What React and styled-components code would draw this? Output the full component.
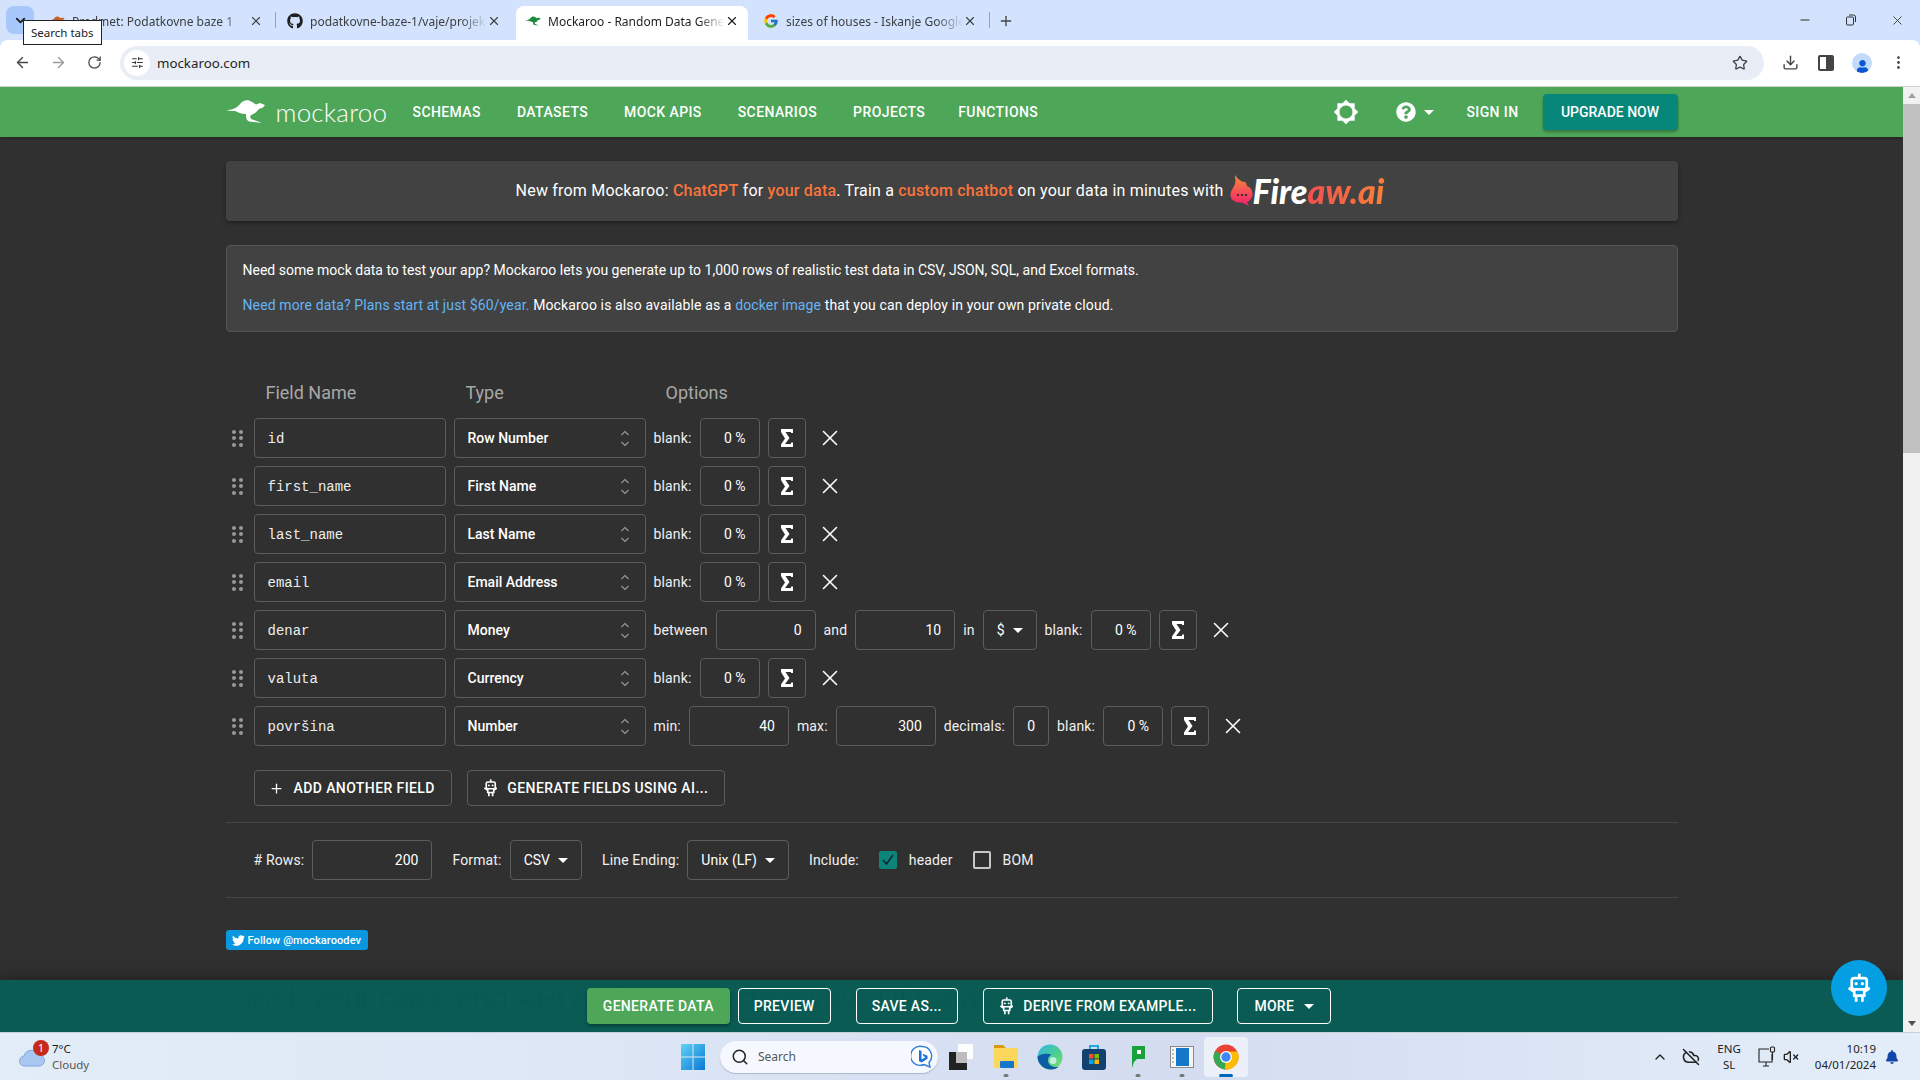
import React from 'react';
import styled, { createGlobalStyle } from 'styled-components';
import {
  ArrowLeft, ArrowRight, RotateCw, Star, Download, EllipsisVertical, ChevronDown, ChevronUp,
  X, Minus, Plus, Search, VolumeX, CloudOff, SlidersHorizontal,
} from 'lucide-react';
import { FaGithub, FaTwitter, FaQuestionCircle, FaUser, FaBell } from 'react-icons/fa';
import { FcGoogle } from 'react-icons/fc';
import { MdBrightness5 } from 'react-icons/md';

const GlobalStyle = createGlobalStyle`
  html, body { margin: 0; padding: 0; height: 100%; overflow: hidden; }
  body { font-family: Roboto, 'Liberation Sans', sans-serif; font-size: 14px; background: #d3e3fd; }
  * { box-sizing: border-box; }
`;

const Screen = styled.div`
  display: flex;
  flex-direction: column;
  height: 100vh;
`;

// Browser chrome - start
const TabStrip = styled.div`
  position: relative;
  display: flex;
  align-items: flex-end;
  height: 40px;
  padding-left: 6px;
  background: #d3e3fd;
  font-family: 'Noto Sans', sans-serif;
  font-size: 12px;
  color: #3c4043;
`;

const SearchTabs = styled.div`
  display: flex;
  align-items: center;
  justify-content: center;
  width: 28px;
  height: 28px;
  margin: 0 6px 6px 0;
  border-radius: 8px;
  background: #a8c7fa;
  color: #1f1f1f;
`;

const Tooltip = styled.div`
  position: absolute;
  left: 23px;
  top: 20px;
  padding: 4px 7px;
  background: #fff;
  border: 1px solid #222;
  font-size: 11.5px;
  line-height: 15px;
  color: #222;
  z-index: 2;
`;

const Tab = styled.div`
  position: relative;
  display: flex;
  align-items: center;
  width: 232px;
  height: 34px;
  margin-right: 6px;
  padding: 0 9px 4px 9px;
  border-radius: 8px 8px 0 0;
  background: ${props => (props.$active ? '#fff' : 'transparent')};
  color: ${props => (props.$active ? '#1f1f1f' : '#3c4043')};

  &::after {
    content: '';
    display: ${props => (props.$divider ? 'block' : 'none')};
    position: absolute;
    right: -4px;
    top: 6px;
    width: 1px;
    height: 16px;
    background: #8ea3c4;
  }
`;

const TabIcon = styled.span`
  display: flex;
  flex: 0 0 16px;
  margin-right: 7px;
`;

const TabTitle = styled.span`
  flex: 1;
  overflow: hidden;
  white-space: nowrap;
  -webkit-mask-image: linear-gradient(to right, #000 85%, transparent 100%);
  mask-image: linear-gradient(to right, #000 85%, transparent 100%);
`;

const NewTab = styled.div`
  display: flex;
  align-items: center;
  justify-content: center;
  width: 20px;
  height: 34px;
  margin-left: 4px;
  padding-bottom: 4px;
  color: #444;
`;

const WindowButtons = styled.div`
  display: flex;
  margin-left: auto;
  align-self: stretch;
`;

const WindowButton = styled.div`
  display: flex;
  align-items: center;
  justify-content: center;
  width: 46px;
  color: #333;
`;

const Toolbar = styled.div`
  display: flex;
  align-items: center;
  height: 47px;
  padding: 0 4px 1px;
  background: #fff;
  border-bottom: 1px solid #d0d0d0;
  border-radius: 8px 8px 0 0;
  color: #444746;
`;

const ToolButton = styled.div`
  display: flex;
  align-items: center;
  justify-content: center;
  flex: 0 0 36px;
  height: 34px;
  color: ${props => props.$dim ? '#9a9c9f' : '#444746'};
`;

const Omnibox = styled.div`
  flex: 1;
  display: flex;
  align-items: center;
  height: 34px;
  margin: 0 8px;
  padding: 0 16px 0 4px;
  border-radius: 17px;
  background: #e9eef6;
  font-family: 'Noto Sans', sans-serif;
  font-size: 13.3px;
  color: #1f1f1f;
`;

const SiteChip = styled.div`
  display: flex;
  align-items: center;
  justify-content: center;
  width: 26px;
  height: 26px;
  margin-right: 7px;
  border-radius: 50%;
  background: #fff;
`;

const Address = styled.span`
  flex: 1;
`;

const Avatar = styled.div`
  display: flex;
  align-items: flex-end;
  justify-content: center;
  width: 20px;
  height: 20px;
  border-radius: 50%;
  background: #c2dbfb;
  color: #0b57d0;
  overflow: hidden;
`;
// Browser chrome - end

const Viewport = styled.div`
  position: relative;
  flex: 1;
  display: flex;
  min-height: 0;
  overflow: hidden;
  background: #303030;
`;

const Page = styled.div`
  flex: 1;
  min-width: 0;
  color: #fff;
`;

const NavBar = styled.div`
  height: 50px;
  background: #4ea658;
  box-shadow: 0 1px 3px rgba(0, 0, 0, 0.3);
`;

const NavInner = styled.div`
  display: flex;
  align-items: center;
  width: 1452px;
  height: 100%;
  margin: 0 auto;
`;

const Logo = styled.div`
  display: flex;
  align-items: center;
  flex: 0 0 187px;
  gap: 10px;
`;

const LogoText = styled.span`
  font-family: Lato, sans-serif;
  font-weight: 300;
  font-size: 26px;
  letter-spacing: 0.2px;
  color: #fff;
  line-height: 1;
`;

const NavLink = styled.a`
  margin-right: ${props => props.$gap ?? 36}px;
  font-weight: 500;
  font-size: 14px;
  letter-spacing: 0.4px;
  color: #fff;
  white-space: nowrap;
`;

const NavRight = styled.div`
  display: flex;
  align-items: center;
  margin-left: auto;
  color: #fff;
`;

const HelpGroup = styled.div`
  display: flex;
  align-items: center;
  gap: 8px;
  margin: 0 32px 0 37px;
`;

const Caret = styled.span`
  display: inline-block;
  width: 0;
  height: 0;
  border-left: 5px solid transparent;
  border-right: 5px solid transparent;
  border-top: 5px solid ${props => props.$color || '#fff'};
`;

const UpgradeButton = styled.div`
  display: flex;
  align-items: center;
  justify-content: center;
  width: 135px;
  height: 36px;
  margin-left: 24px;
  border-radius: 4px;
  background: #07867a;
  font-weight: 500;
  box-shadow: 0 2px 3px rgba(0, 0, 0, 0.3);
`;

const Content = styled.div`
  width: 1452px;
  margin: 0 auto;
  padding-top: 24px;
`;

const Banner = styled.div`
  display: flex;
  align-items: center;
  justify-content: center;
  height: 60px;
  margin-bottom: 24px;
  padding-bottom: 1px;
  border-radius: 4px;
  background: #424242;
  box-shadow: 0 2px 4px rgba(0, 0, 0, 0.35);
  font-size: 16px;
  letter-spacing: 0.2px;
`;

const Hot = styled.span`
  color: #f9743c;
  font-weight: 500;
`;

const FireMark = styled.span`
  display: flex;
  align-items: center;
  margin-left: 6px;
  font-family: Lato, sans-serif;
  font-style: italic;
  font-weight: 900;
  font-size: 34px;
  letter-spacing: 0;
  line-height: 1;
`;

const FireAccent = styled.span`
  padding-right: 3px;
  background: linear-gradient(90deg, #f2504e, #f9823a);
  -webkit-background-clip: text;
  background-clip: text;
  color: transparent;
`;

const InfoBox = styled.div`
  height: 87px;
  padding: 15px 16px;
  border: 1px solid #555;
  border-radius: 4px;
  background: #424242;
  line-height: 19px;
`;

const InfoLine = styled.p`
  margin: 0 0 16px;
  letter-spacing: ${props => props.$spread || 0}px;
`;

const Link = styled.a`
  color: #64b5f6;
`;

const ColumnHeads = styled.div`
  display: grid;
  grid-template-columns: 200px 200px 200px;
  height: 26px;
  margin-top: 48px;
  margin-bottom: 12px;
  padding-left: 40px;
  font-size: 18px;
  line-height: 26px;
  color: #a8a8a8;
`;

const Row = styled.div`
  display: flex;
  align-items: center;
  gap: 8px;
  height: 40px;
  margin-bottom: 8px;
`;

const Handle = styled.div`
  display: grid;
  grid-template-columns: 4px 4px;
  gap: 2.5px 3px;
  justify-content: center;
  flex: 0 0 20px;
  padding-left: 4px;

  span {
    width: 4px;
    height: 4px;
    border-radius: 50%;
    background: #999;
  }
`;

const Box = styled.div`
  display: flex;
  align-items: center;
  flex: 0 0 ${props => props.$w}px;
  height: 40px;
  border: 1px solid #5c5c5c;
  border-radius: 4px;
`;

const NameBox = styled(Box)`
  padding: 1px 0 0 13px;
  font-family: 'Liberation Mono', monospace;
  font-size: 14px;
  color: #eee;
`;

const TypeBox = styled(Box)`
  justify-content: space-between;
  padding: 0 15px 0 13px;
  font-weight: 500;
`;

const NumberBox = styled(Box)`
  justify-content: ${props => (props.$center ? 'center' : 'flex-end')};
  padding: ${props => (props.$center ? '0' : '0 13px')};
`;

const DropBox = styled.div`
  display: flex;
  align-items: center;
  gap: 8px;
  height: 40px;
  padding: 0 ${props => props.$pad || 13}px;
  border: 1px solid #5c5c5c;
  border-radius: 4px;
`;

const Label = styled.span`
  white-space: nowrap;
  letter-spacing: 0.15px;
  color: #f0f0f0;
`;

const SumButton = styled(Box)`
  justify-content: center;
  flex-basis: 38px;
`;

const RemoveButton = styled.div`
  display: flex;
  align-items: center;
  justify-content: center;
  flex: 0 0 32px;
  color: #fff;
`;

const Actions = styled.div`
  display: flex;
  gap: 15px;
  margin: 24px 0 16px 28px;
`;

const OutlineButton = styled.div`
  display: flex;
  align-items: center;
  gap: 10px;
  height: 36px;
  padding: 0 16px 0 ${props => props.$lead || 16}px;
  border: 1px solid #5c5c5c;
  border-radius: 4px;
  font-weight: 500;
  letter-spacing: 0.4px;
  white-space: nowrap;
`;

const Rule = styled.div`
  height: 1px;
  background: #474747;
`;

const Settings = styled.div`
  display: flex;
  align-items: center;
  height: 40px;
  margin: 17px 0 17px 28px;
`;

const Spaced = styled.span`
  display: flex;
  align-items: center;
  gap: 8px;
  margin-right: ${props => props.$gap}px;
`;

const Check = styled.span`
  display: flex;
  align-items: center;
  justify-content: center;
  width: 18px;
  height: 18px;
  margin-left: ${props => props.$offset || 0}px;
  margin-right: 12px;
  border-radius: 2px;
  background: ${props => (props.$on ? '#0b8577' : 'transparent')};
  border: 2px solid ${props => (props.$on ? '#0b8577' : '#c8c8c8')};
`;

const TwitterFollow = styled.a`
  display: inline-flex;
  align-items: center;
  gap: 3px;
  height: 20px;
  margin-top: 32px;
  padding: 0 7px 0 6px;
  border-radius: 3px;
  background: #0a97e0;
  color: #fff;
  font-size: 11px;
  font-weight: 500;
  letter-spacing: 0.1px;
`;

const Tagline = styled.h2`
  margin: 29px 0 0;
  font-size: 32px;
  font-weight: 300;
  line-height: 38px;
  color: #102010;
`;

const ActionBar = styled.div`
  position: absolute;
  left: 0;
  right: 17px;
  bottom: 0;
  display: flex;
  align-items: center;
  justify-content: center;
  height: 52px;
  padding-left: 15px;
  background: rgba(7, 95, 87, 0.92);
  box-shadow: 0 -4px 12px rgba(0, 0, 0, 0.25);
  color: #fff;
`;

const GreenButton = styled.div`
  display: flex;
  align-items: center;
  height: 36px;
  margin-right: 8px;
  padding: 0 16px;
  border-radius: 4px;
  background: #4ea658;
  font-weight: 500;
  letter-spacing: 0.3px;
  box-shadow: 0 2px 3px rgba(0, 0, 0, 0.3);
`;

const BarButton = styled.div`
  display: flex;
  align-items: center;
  gap: 10px;
  height: 36px;
  margin-left: ${props => props.$gap ?? 24}px;
  padding: 0 ${props => props.$pad || 15}px;
  border: 1px solid #fff;
  border-radius: 4px;
  font-weight: 500;
  letter-spacing: 0.3px;
  white-space: nowrap;
`;

const BotBubble = styled.div`
  position: absolute;
  right: 33px;
  bottom: 16px;
  display: flex;
  align-items: center;
  justify-content: center;
  width: 56px;
  height: 56px;
  border-radius: 50%;
  background: #049ee2;
  color: #fff;
`;

const Scrollbar = styled.div`
  position: relative;
  z-index: 1;
  display: flex;
  flex-direction: column;
  align-items: center;
  flex: 0 0 17px;
  background: #f1f1f1;
`;

const ScrollArrow = styled.span`
  display: block;
  margin: 6px 0;
  border-left: 4px solid transparent;
  border-right: 4px solid transparent;
  ${props => (props.$down
    ? 'margin-top: auto; border-top: 5px solid #505050;'
    : 'border-bottom: 5px solid #a0a0a0;')}
`;

const ScrollThumb = styled.div`
  width: 100%;
  height: 349px;
  background: #c1c1c1;
`;

// Windows taskbar - start
const Taskbar = styled.div`
  display: flex;
  align-items: center;
  height: 48px;
  background: linear-gradient(90deg, #e3edf7 0%, #dde7f6 30%, #d4dcf0 60%, #dbe5f5 80%, #e4eef9 100%);
  border-top: 1px solid #c8ced6;
  font-family: 'Noto Sans', sans-serif;
  font-size: 12px;
  color: #1c1c1c;
`;

const Weather = styled.div`
  display: flex;
  align-items: center;
  flex: 0 0 671px;
  padding-left: 19px;
`;

const CloudWrap = styled.div`
  position: relative;
  width: 26px;
  height: 20px;
  margin-right: 7px;
`;

const Badge = styled.span`
  position: absolute;
  right: -4px;
  top: -7px;
  width: 16px;
  height: 16px;
  border-radius: 50%;
  background: #c42b1c;
  color: #fff;
  font-size: 10.5px;
  line-height: 16px;
  text-align: center;
`;

const WeatherText = styled.div`
  line-height: 15.5px;
  font-size: 11.5px;
`;

const Muted = styled.div`
  color: #555;
`;

const TaskIcon = styled.div`
  position: relative;
  display: flex;
  align-items: center;
  justify-content: center;
  flex: 0 0 44px;
  height: 40px;
  margin-right: ${props => props.$gap || 0}px;
  border-radius: 4px;
  background: ${props => (props.$active ? 'rgba(255,255,255,0.55)' : 'transparent')};

  &::after {
    content: '';
    display: ${props => (props.$running ? 'block' : 'none')};
    position: absolute;
    left: 50%;
    bottom: 0;
    width: ${props => (props.$active ? 14 : 5)}px;
    height: 3px;
    transform: translateX(-50%);
    border-radius: 2px;
    background: ${props => (props.$active ? '#0067c0' : '#777')};
  }
`;

const SearchPill = styled.div`
  display: flex;
  align-items: center;
  gap: 9px;
  width: 218px;
  height: 32px;
  margin-right: 2px;
  padding: 0 5px 0 11px;
  border-radius: 16px;
  background: #f5f8fe;
  box-shadow: 0 1px 1px rgba(90, 100, 130, 0.35);
  color: #555;
`;

const SearchWord = styled.span`
  flex: 1;
`;

const Tray = styled.div`
  display: flex;
  align-items: center;
  margin-left: auto;
  padding-right: 21px;
  color: #222;
`;

const TrayGap = styled.span`
  display: flex;
  margin-left: ${props => props.$left}px;
`;

const LangBlock = styled.div`
  margin: 0 17px;
  text-align: center;
  line-height: 16px;
  font-size: 11.5px;
`;

const Clock = styled.div`
  margin: 0 9px 0 16px;
  text-align: right;
  line-height: 16px;
  font-size: 11.5px;
`;
// Windows taskbar - end

const KangarooIcon = ({ width = 40, color = '#fff' }) => (
  <svg width={width} viewBox="0 0 40 26" fill={color}>
    <path d="M0 11C6 11 11 9 14 5C17 1 22 0 26 3L30 5.5L34 4L39 6L37 8.5L33 10C31 12 30 14 27 15L24 17L25 20L36 24L23 22.5C20 21 20 18 20 15C15 15 12 13 9 12C6 12 3 12 0 11Z" />
  </svg>
);

const RobotIcon = ({ size = 18, color = 'currentColor' }) => (
  <svg width={size * 0.75} height={size} viewBox="3 0 18 24" fill="none" stroke={color} strokeWidth="2.2">
    <path d="M12 0.5V4" />
    <rect x="6" y="4" width="12" height="9" rx="2" />
    <path d="M9.5 8.5h.01M14.5 8.5h.01" strokeLinecap="round" strokeWidth="2.6" />
    <path d="M8 13v5h8v-5M3.5 12l4.5 3M20.5 12L16 15M9.5 18v5M14.5 18v5" />
  </svg>
);

const SigmaIcon = () => (
  <svg width="14" height="18" viewBox="0 0 14 18" fill="#fff">
    <path d="M1 0H13V4H11V3H5.500L9.500 9L5 15H11V13.500H13V18H1V15.500L5 9.500L1 3Z" />
  </svg>
);

const UpDownIcon = () => (
  <svg width="10" height="17" viewBox="0 0 10 17" fill="none" stroke="#999" strokeWidth="1.2">
    <path d="M1.5 5L5 1.5L8.5 5M1.5 12L5 15.5L8.5 12" />
  </svg>
);

const FlameIcon = () => (
  <svg width="23" height="31" viewBox="0 0 23 31">
    <defs>
      <linearGradient id="flame" x1="0" y1="0" x2="0" y2="1">
        <stop offset="0" stopColor="#f98b3a" />
        <stop offset="1" stopColor="#f01e6a" />
      </linearGradient>
    </defs>
    <path fill="url(#flame)" d="M5 0C7 3 9 5 13 7C16 6 16 8 17 11C20 12 23 15 22.5 20C22 24 19 26.500 17 27L19 31L12 27.500C5 28 0 25 0.500 19C1 15 4 12 5 9C6 6 5 3 5 0Z" />
    <path fill="#3f2a2a" d="M7 19h2v2H7zM11 19h2v2h-2zM15 19h2v2h-2z" />
  </svg>
);

const ChromeLogo = ({ size = 26 }) => (
  <svg width={size} height={size} viewBox="0 0 24 24">
    <circle cx="12" cy="12" r="11.500" fill="#ea4335" />
    <path fill="#34a853" d="M12 12L2 6.500A11.500 11.500 0 0 0 12 23.500L17 14Z" />
    <path fill="#fbbc05" d="M12 12L11 23.500A11.500 11.500 0 0 0 22.500 7H12Z" />
    <circle cx="12" cy="12" r="5.500" fill="#fff" />
    <circle cx="12" cy="12" r="4.300" fill="#4285f4" />
  </svg>
);

const WindowsLogo = () => (
  <svg width="24" height="26" viewBox="0 0 24 26">
    <defs>
      <linearGradient id="win" x1="0" y1="0" x2="1" y2="1">
        <stop offset="0" stopColor="#5fd3f5" />
        <stop offset="1" stopColor="#0a78d4" />
      </linearGradient>
    </defs>
    <path fill="url(#win)" d="M0 0h11.500v12.500H0zM12.500 0H24v12.500H12.500zM0 13.500h11.500V26H0zM12.500 13.500H24V26H12.500z" />
  </svg>
);

const BingIcon = () => (
  <svg width="22" height="24" viewBox="0 0 22 24" fill="none">
    <path d="M11 1.500a9.500 9.500 0 0 1 7 16l1 4.500-6-2.500a9.500 9.500 0 1 1-2-18z" stroke="#2b7de0" strokeWidth="1.4" fill="#fff" />
    <path d="M8 5l2.500 1v8.500l4-2.200-2-1-1-2.500 5 2v3l-6 3.700-2.500-1.500z" fill="#1b6fd8" />
  </svg>
);

const TaskViewIcon = () => (
  <svg width="26" height="26" viewBox="0 0 26 26">
    <rect x="9" y="0" width="15" height="15" fill="#fdfdfd" />
    <rect x="0" y="8" width="18" height="18" fill="#222" />
    <rect x="7" y="8" width="11" height="11" fill="#bdbdbd" />
  </svg>
);

const FolderIcon = () => (
  <svg width="26" height="25" viewBox="0 0 26 25">
    <path fill="#d99a12" d="M1 1h9l3 3h12v4H1z" />
    <rect x="1" y="4" width="24" height="20" rx="1" fill="#fbd75b" />
    <rect x="7" y="17" width="14" height="7" rx="1" fill="#1477c8" />
  </svg>
);

const EdgeIcon = () => (
  <svg width="26" height="26" viewBox="0 0 26 26">
    <defs>
      <linearGradient id="edge" x1="0" y1="0" x2="1" y2="1">
        <stop offset="0" stopColor="#2fb7e8" />
        <stop offset="0.6" stopColor="#4ed08a" />
        <stop offset="1" stopColor="#8adf6b" />
      </linearGradient>
    </defs>
    <circle cx="13" cy="13" r="12.500" fill="url(#edge)" />
    <path fill="#0c59a4" d="M0.500 13C1 20 7 25.500 14 25.500c3.500 0 6-1 8-3-4 1.500-9 0-10.500-3.500-1.500-3.500 0-7 3-8.500-5-2-13 0-14 2.500z" />
    <circle cx="16" cy="16.500" r="3.500" fill="#dff5ee" opacity="0.8" />
  </svg>
);

const StoreIcon = () => (
  <svg width="24" height="26" viewBox="0 0 24 26">
    <path d="M8 5V2h8v3" fill="none" stroke="#25a5e0" strokeWidth="2" />
    <rect x="0" y="5" width="24" height="21" rx="3" fill="#12406f" />
    <rect x="7" y="10" width="4.500" height="4.500" fill="#f25022" />
    <rect x="12.500" y="10" width="4.500" height="4.500" fill="#7fba00" />
    <rect x="7" y="15.500" width="4.500" height="4.500" fill="#00a4ef" />
    <rect x="12.500" y="15.500" width="4.500" height="4.500" fill="#ffb900" />
  </svg>
);

const GreenAppIcon = () => (
  <svg width="18" height="24" viewBox="0 0 18 24">
    <path fill="#1aa23a" d="M3 1h13v13H8l-3 3-2 6z" />
    <rect x="8" y="5" width="4" height="4" fill="#fff" />
  </svg>
);

const FilmIcon = () => (
  <svg width="24" height="24" viewBox="0 0 24 24">
    <rect x="0.500" y="1.500" width="23" height="21" fill="#f5f5f5" stroke="#888" />
    <rect x="6" y="3" width="13" height="18" fill="#1577c9" />
    <path d="M2 5h2M2 9h2M2 13h2M2 17h2" stroke="#888" />
  </svg>
);

const MonitorPlugIcon = () => (
  <svg width="20" height="22" viewBox="0 0 20 22" fill="none" stroke="#222" strokeWidth="1.100">
    <path d="M11 3H1v13h13V8M5 20h6M8 16v4" />
    <rect x="12.500" y="1" width="4" height="5" rx="1" />
    <path d="M14.500 6v8" />
  </svg>
);

const CloudIcon = () => (
  <svg width="26" height="20" viewBox="0 0 26 20">
    <path fill="#a8c8f2" stroke="#7fa8de" d="M6 19a5 5 0 0 1-1-10A8 8 0 0 1 20 8a5.500 5.500 0 0 1 0 11z" />
  </svg>
);

const FIELDS = [
  { name: 'id', type: 'Row Number' },
  { name: 'first_name', type: 'First Name' },
  { name: 'last_name', type: 'Last Name' },
  { name: 'email', type: 'Email Address' },
  { name: 'denar', type: 'Money', kind: 'money' },
  { name: 'valuta', type: 'Currency' },
  { name: 'površina', type: 'Number', kind: 'number' },
];

const BlankOption = () => (
  <>
    <Label>blank:</Label>
    <NumberBox $w={60}>0 %</NumberBox>
    <SumButton $w={38}><SigmaIcon /></SumButton>
    <RemoveButton><X size={26} strokeWidth={1.5} /></RemoveButton>
  </>
);

const FieldRow = ({ name, type, kind }) => (
  <Row>
    <Handle>
      <span /><span /><span /><span /><span /><span />
    </Handle>
    <NameBox $w={192}>{name}</NameBox>
    <TypeBox $w={192}>{type}<UpDownIcon /></TypeBox>
    {kind === 'money' && (
      <>
        <Label>between</Label>
        <NumberBox $w={100}>0</NumberBox>
        <Label>and</Label>
        <NumberBox $w={100}>10</NumberBox>
        <Label>in</Label>
        <DropBox $pad={13}>$<Caret /></DropBox>
      </>
    )}
    {kind === 'number' && (
      <>
        <Label>min:</Label>
        <NumberBox $w={100}>40</NumberBox>
        <Label>max:</Label>
        <NumberBox $w={100}>300</NumberBox>
        <Label>decimals:</Label>
        <NumberBox $w={36} $center>0</NumberBox>
      </>
    )}
    <BlankOption />
  </Row>
);

const BrowserTabs = () => (
  <TabStrip>
    <SearchTabs><ChevronDown size={15} strokeWidth={3} /></SearchTabs>
    <Tooltip>Search tabs</Tooltip>
    <Tab $divider>
      <TabIcon><KangarooIcon width={16} color="#c8622a" /></TabIcon>
      <TabTitle>Predmet: Podatkovne baze 1</TabTitle>
      <X size={14} />
    </Tab>
    <Tab>
      <TabIcon><FaGithub size={16} color="#1f1f1f" /></TabIcon>
      <TabTitle>podatkovne-baze-1/vaje/projekt</TabTitle>
      <X size={14} />
    </Tab>
    <Tab $active>
      <TabIcon><KangarooIcon width={16} color="#1e8a3c" /></TabIcon>
      <TabTitle>Mockaroo - Random Data Generator</TabTitle>
      <X size={14} />
    </Tab>
    <Tab $divider>
      <TabIcon><FcGoogle size={16} /></TabIcon>
      <TabTitle>sizes of houses - Iskanje Google</TabTitle>
      <X size={14} />
    </Tab>
    <NewTab><Plus size={16} /></NewTab>
    <WindowButtons>
      <WindowButton><Minus size={14} /></WindowButton>
      <WindowButton>
        <svg width="12" height="12" viewBox="0 0 12 12" fill="none" stroke="#333">
          <rect x="1.500" y="3" width="7" height="8" rx="1" />
          <path d="M4 1h4.500a2 2 0 0 1 2 2v5" />
        </svg>
      </WindowButton>
      <WindowButton><X size={15} strokeWidth={1.4} /></WindowButton>
    </WindowButtons>
  </TabStrip>
);

const BrowserToolbar = () => (
  <Toolbar>
    <ToolButton><ArrowLeft size={17} /></ToolButton>
    <ToolButton $dim><ArrowRight size={17} /></ToolButton>
    <ToolButton><RotateCw size={15} /></ToolButton>
    <Omnibox>
      <SiteChip><SlidersHorizontal size={13} color="#333" /></SiteChip>
      <Address>mockaroo.com</Address>
      <Star size={16} color="#444" />
    </Omnibox>
    <ToolButton><Download size={17} /></ToolButton>
    <ToolButton>
      <svg width="16" height="16" viewBox="0 0 16 16">
        <rect x="1" y="1" width="14" height="14" rx="1" fill="none" stroke="#444" strokeWidth="2" />
        <rect x="8" y="1" width="7" height="14" fill="#444" />
      </svg>
    </ToolButton>
    <ToolButton><Avatar><FaUser size={13} /></Avatar></ToolButton>
    <ToolButton><EllipsisVertical size={17} /></ToolButton>
  </Toolbar>
);

const TopNav = () => (
  <NavBar>
    <NavInner>
      <Logo>
        <KangarooIcon />
        <LogoText>mockaroo</LogoText>
      </Logo>
      <NavLink>SCHEMAS</NavLink>
      <NavLink>DATASETS</NavLink>
      <NavLink>MOCK APIS</NavLink>
      <NavLink>SCENARIOS</NavLink>
      <NavLink $gap={33}>PROJECTS</NavLink>
      <NavLink>FUNCTIONS</NavLink>
      <NavRight>
        <MdBrightness5 size={26} />
        <HelpGroup>
          <FaQuestionCircle size={20} />
          <Caret />
        </HelpGroup>
        <NavLink $gap={0}>SIGN IN</NavLink>
        <UpgradeButton>UPGRADE NOW</UpgradeButton>
      </NavRight>
    </NavInner>
  </NavBar>
);

const WinTaskbar = () => (
  <Taskbar>
    <Weather>
      <CloudWrap>
        <CloudIcon />
        <Badge>1</Badge>
      </CloudWrap>
      <WeatherText>
        7°C
        <Muted>Cloudy</Muted>
      </WeatherText>
    </Weather>
    <TaskIcon $gap={5}><WindowsLogo /></TaskIcon>
    <SearchPill>
      <Search size={18} color="#222" />
      <SearchWord>Search</SearchWord>
      <BingIcon />
    </SearchPill>
    <TaskIcon><TaskViewIcon /></TaskIcon>
    <TaskIcon $running><FolderIcon /></TaskIcon>
    <TaskIcon><EdgeIcon /></TaskIcon>
    <TaskIcon><StoreIcon /></TaskIcon>
    <TaskIcon $running><GreenAppIcon /></TaskIcon>
    <TaskIcon $running><FilmIcon /></TaskIcon>
    <TaskIcon $running $active><ChromeLogo /></TaskIcon>
    <Tray>
      <ChevronUp size={16} />
      <TrayGap $left={14}><CloudOff size={18} /></TrayGap>
      <LangBlock>ENG<br />SL</LangBlock>
      <MonitorPlugIcon />
      <TrayGap $left={5}><VolumeX size={16} /></TrayGap>
      <Clock>10:19<br />04/01/2024</Clock>
      <FaBell size={14} color="#1246a8" />
    </Tray>
  </Taskbar>
);

export default function App() {
  return (
    <Screen>
      <GlobalStyle />
      <BrowserTabs />
      <BrowserToolbar />
      <Viewport>
        <Page>
          <TopNav />
          <Content>
            <Banner>
              New from Mockaroo:&nbsp;<Hot>ChatGPT</Hot>&nbsp;for&nbsp;<Hot>your data</Hot>. Train a&nbsp;
              <Hot>custom chatbot</Hot>&nbsp;on your data in minutes with
              <FireMark>
                <FlameIcon />
                Fire<FireAccent>aw.ai</FireAccent>
              </FireMark>
            </Banner>
            <InfoBox>
              <InfoLine>Need some mock data to test your app? Mockaroo lets you generate up to 1,000 rows of realistic test data in CSV, JSON, SQL, and Excel formats.</InfoLine>
              <InfoLine $spread={0.13}>
                <Link>Need more data? Plans start at just $60/year.</Link> Mockaroo is also available as a <Link>docker image</Link> that you can deploy in your own private cloud.
              </InfoLine>
            </InfoBox>
            <ColumnHeads>
              <span>Field Name</span>
              <span>Type</span>
              <span>Options</span>
            </ColumnHeads>
            {FIELDS.map(field => <FieldRow key={field.name} {...field} />)}
            <Actions>
              <OutlineButton $lead={14}><Plus size={15} strokeWidth={2} />ADD ANOTHER FIELD</OutlineButton>
              <OutlineButton><RobotIcon />GENERATE FIELDS USING AI...</OutlineButton>
            </Actions>
            <Rule />
            <Settings>
              <Spaced $gap={20}><Label># Rows:</Label><NumberBox $w={120}>200</NumberBox></Spaced>
              <Spaced $gap={20}><Label>Format:</Label><DropBox>CSV<Caret /></DropBox></Spaced>
              <Spaced $gap={20}><Label>Line Ending:</Label><DropBox>Unix (LF)<Caret /></DropBox></Spaced>
              <Label>Include:</Label>
              <Check $on $offset={20}>
                <svg width="14" height="14" viewBox="0 0 14 14" fill="none" stroke="#123" strokeWidth="1.500"><path d="M2 7l3.500 4L12 2" /></svg>
              </Check>
              <Spaced $gap={20}><Label>header</Label></Spaced>
              <Check />
              <Label>BOM</Label>
            </Settings>
            <Rule />
            <TwitterFollow><FaTwitter size={13} />Follow @mockaroodev</TwitterFollow>
            <Tagline>Mock your back-end API and start coding your UI today.</Tagline>
          </Content>
        </Page>
        <Scrollbar>
          <ScrollArrow />
          <ScrollThumb />
          <ScrollArrow $down />
        </Scrollbar>
        <ActionBar>
          <GreenButton>GENERATE DATA</GreenButton>
          <BarButton $gap={0}>PREVIEW</BarButton>
          <BarButton $gap={25}>SAVE AS...</BarButton>
          <BarButton $gap={25} $pad={16}><RobotIcon />DERIVE FROM EXAMPLE...</BarButton>
          <BarButton $pad={16}>MORE<Caret /></BarButton>
        </ActionBar>
        <BotBubble><RobotIcon size={30} /></BotBubble>
      </Viewport>
      <WinTaskbar />
    </Screen>
  );
}
